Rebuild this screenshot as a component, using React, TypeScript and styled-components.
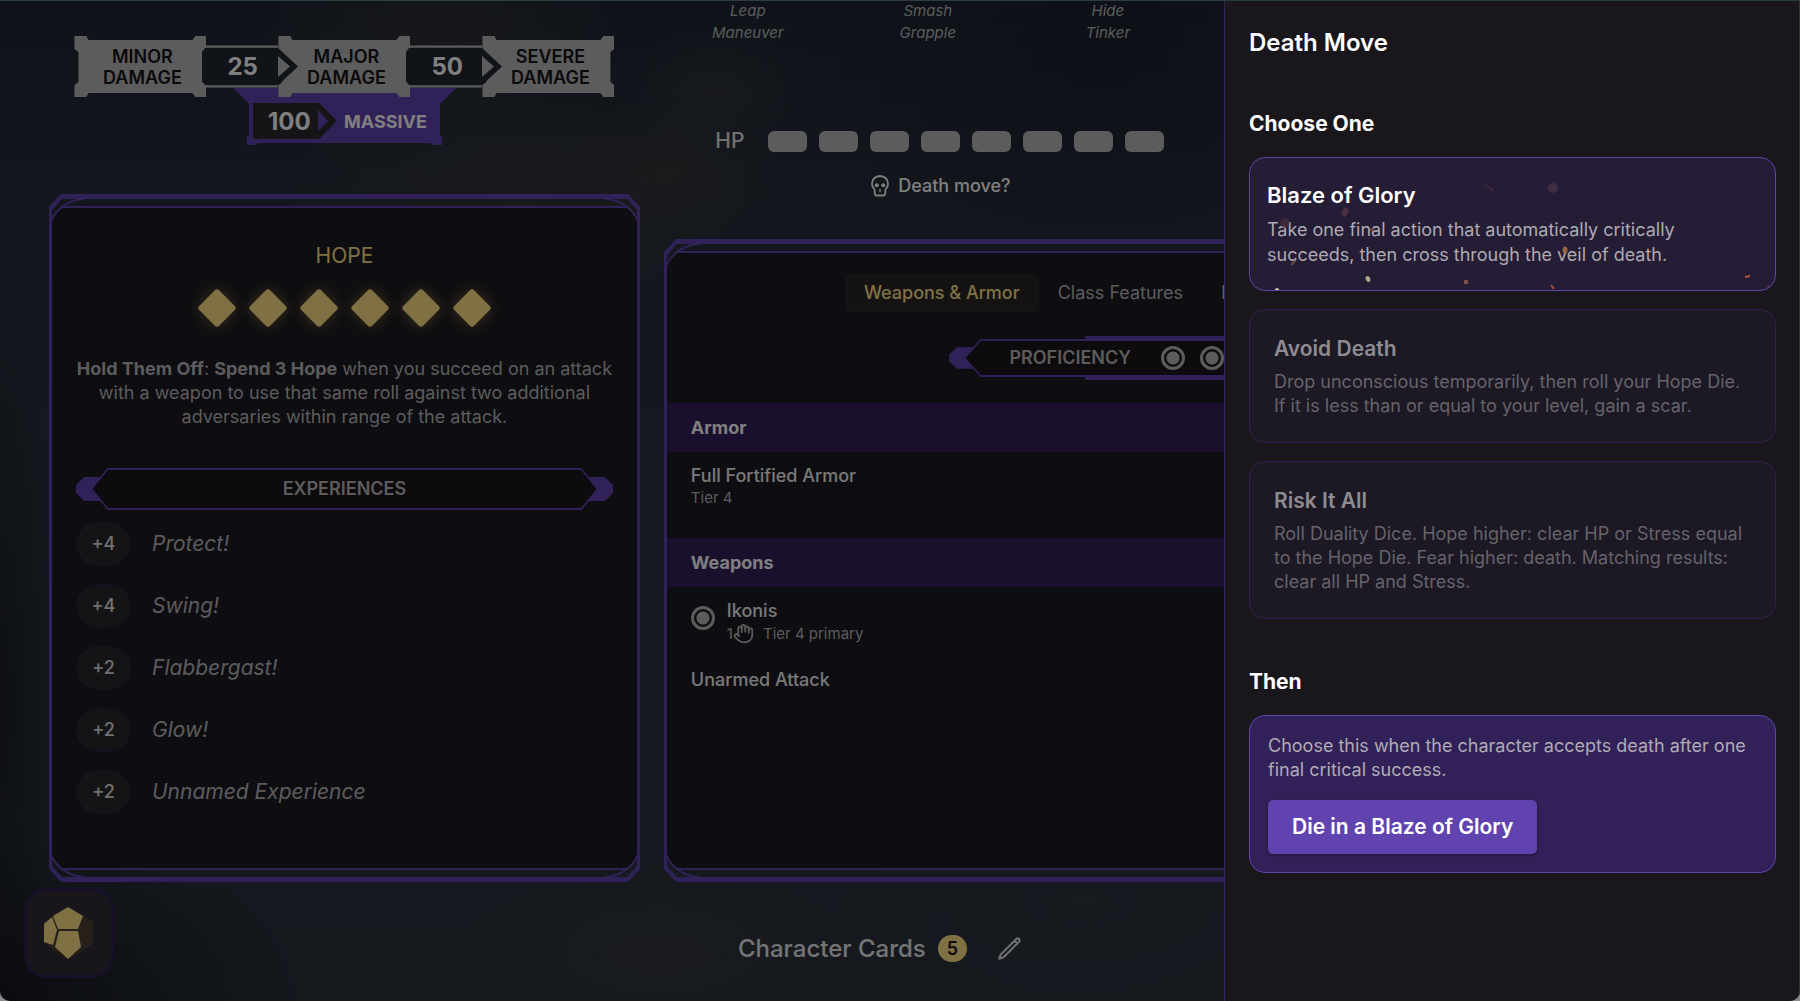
import React, { useState } from "react";
import styled, { createGlobalStyle, css } from "styled-components";
import { Hand } from "lucide-react";
import { HiOutlinePencil } from "react-icons/hi2";

const purple = "#6143b0";
const gold = "#ffe286";
const silver = "#b8b8b8";

const GlobalStyle = createGlobalStyle`
  * { box-sizing: border-box; }
  html { background: #8c8c8c; }
  body {
    margin: 0;
    font-family: Inter, "Liberation Sans", sans-serif;
    font-size: 18px;
    line-height: 24px;
    color: #fff;
  }
  button {
    font: inherit;
    color: inherit;
    background: none;
    border: 0;
    padding: 0;
    margin: 0;
    cursor: pointer;
  }
  h1, h2, h3, p, ul { margin: 0; padding: 0; font-weight: inherit; }
`;

const Window = styled.div`
  position: relative;
  display: flex;
  flex-direction: column;
  min-height: 100vh;
  overflow: hidden;
  border-radius: 0 0 10px 10px;
  background-color: #252d3a;
  background-image:
    radial-gradient(ellipse 240px 120px at 520px 200px, rgba(68, 60, 56, 0.4), transparent),
    radial-gradient(ellipse 180px 90px at 440px 30px, rgba(70, 62, 56, 0.35), transparent),
    radial-gradient(ellipse 90px 60px at 715px 90px, rgba(66, 64, 66, 0.4), transparent),
    radial-gradient(ellipse 110px 70px at 670px 170px, rgba(70, 62, 52, 0.35), transparent),
    radial-gradient(ellipse 300px 200px at 1100px 60px, rgba(22, 30, 42, 0.6), transparent),
    radial-gradient(ellipse 260px 120px at 1080px 900px, rgba(50, 56, 66, 0.5), transparent),
    radial-gradient(ellipse 200px 90px at 660px 950px, rgba(66, 60, 56, 0.35), transparent),
    radial-gradient(ellipse 300px 180px at 0px 1000px, rgba(14, 15, 18, 0.7), transparent),
    radial-gradient(ellipse 60px 400px at 0px 700px, rgba(22, 24, 30, 0.8), transparent),
    linear-gradient(180deg, #1f2733 0%, #272f3b 20%, #2b3440 60%, #2a323d 100%);
`;

const Sheet = styled.main`
  flex: 1;
  display: grid;
  grid-template-columns: minmax(0, 25fr) minmax(0, 46fr);
  gap: 24px;
  padding: 0 49px;
  isolation: isolate;
`;

const Column = styled.section`
  display: flex;
  flex-direction: column;
`;

/* ---------- Damage thresholds ---------- */

const Thresholds = styled.div`
  height: 194px;
  padding-top: 36px;
  display: flex;
  flex-direction: column;
  align-items: center;
`;

const ThresholdRow = styled.div`
  position: relative;
  z-index: 1;
  display: flex;
  align-items: center;
`;

const Plate = styled.div`
  width: 132px;
  height: 61px;
  display: flex;
  align-items: center;
  justify-content: center;
  padding-left: 4px;
  background: ${silver};
  color: #151318;
  font-weight: 600;
  line-height: 21px;
  text-align: center;
  clip-path: polygon(
    0 0, 12px 0, 14px 4px, 118px 4px, 121px 0, 100% 0, 100% 13px, 128px 16px,
    128px 46px, 100% 49px, 100% 100%, 121px 100%, 118px 57px, 14px 57px,
    12px 100%, 0 100%, 0 49px, 4px 46px, 4px 16px, 0 13px
  );
`;

const Connector = styled.div`
  position: relative;
  z-index: 1;
  width: 96px;
  height: 43px;
  margin: 0 -20px 0 -4px;
  display: flex;
  align-items: center;
  padding-left: 25px;
  font-size: 24px;
  font-weight: 700;
  isolation: isolate;
`;

const Art = styled.svg`
  position: absolute;
  inset: 0;
  width: 100%;
  height: 100%;
  z-index: -1;
`;

const Massive = styled.div`
  position: relative;
  width: 223px;
  height: 57px;
  margin-top: -9px;
  padding: 11px 29px 0 35px;
  display: flex;
  align-items: center;
  justify-content: space-between;
  font-weight: 700;
  isolation: isolate;
`;

const MassiveValue = styled.span`
  font-size: 24px;
`;

/* ---------- Framed panel ---------- */

const Frame = styled.div`
  position: relative;
  flex: 1;
  isolation: isolate;
  &::before {
    content: "";
    position: absolute;
    z-index: -1;
    inset: 13px 2px 13px 2px;
    border-radius: 18px;
    background: rgba(28, 26, 33, 0.96);
  }
`;

const FrameBand = styled.span<{ $end?: boolean }>`
  position: absolute;
  left: 12px;
  right: 12px;
  height: 14px;
  border: 0 solid ${purple};
  ${(p) =>
    p.$end
      ? css`bottom: 0; border-bottom-width: 5px; border-top-width: 2px;`
      : css`top: 0; border-top-width: 5px; border-bottom-width: 2px;`}
`;

const FrameSide = styled.span<{ $end?: boolean }>`
  position: absolute;
  top: 13px;
  bottom: 13px;
  width: 3px;
  background: ${purple};
  ${(p) => (p.$end ? "right: 0;" : "left: 0;")}
`;

const CornerArt = styled.svg<{ $x?: boolean; $y?: boolean }>`
  position: absolute;
  width: 36px;
  height: 30px;
  ${(p) => (p.$x ? "right: 0;" : "left: 0;")}
  ${(p) => (p.$y ? "bottom: 0;" : "top: 0;")}
  transform: scale(${(p) => (p.$x ? -1 : 1)}, ${(p) => (p.$y ? -1 : 1)});
`;

const Corner = (p: { $x?: boolean; $y?: boolean }) => (
  <CornerArt {...p} viewBox="0 0 36 30" fill="none" aria-hidden="true">
    <path d="M0 13 12 0V6L3 16V24H0Z" fill={purple} />
    <path d="M36 4.500C22 6 9 12 2 27" stroke={purple} strokeWidth="1.800" />
  </CornerArt>
);

const Panel = ({ children }: { children: React.ReactNode }) => (
  <Frame>
    <FrameBand />
    <FrameBand $end />
    <FrameSide />
    <FrameSide $end />
    <Corner />
    <Corner $x />
    <Corner $y />
    <Corner $x $y />
    {children}
  </Frame>
);

/* ---------- Banner ---------- */

const BannerBox = styled.div<{ $height: number }>`
  position: relative;
  display: flex;
  height: ${(p) => p.$height}px;
  color: ${silver};
  font-weight: 600;
`;

const BannerBody = styled.div<{ $start?: boolean }>`
  flex: 1;
  display: flex;
  align-items: center;
  justify-content: ${(p) => (p.$start ? "flex-start" : "center")};
  padding-left: ${(p) => (p.$start ? 28 : 0)}px;
  border: solid ${purple};
  border-width: 2px 0;
  background: #1a161b;
`;

const CapArt = styled.svg<{ $flip?: boolean }>`
  width: 32px;
  height: 100%;
  transform: scaleX(${(p) => (p.$flip ? -1 : 1)});
`;

const Cap = ({ $flip }: { $flip?: boolean }) => (
  <CapArt $flip={$flip} viewBox="0 0 32 42" preserveAspectRatio="none" aria-hidden="true">
    <path d="M8 9H26V33H8L0 25V17Z" fill={purple} />
    <path d="M32 0H31.500L14.500 21 31.500 42H32Z" fill={purple} />
    <path d="M32 2 16.500 21 32 40Z" fill="#1a161b" />
  </CapArt>
);

/* ---------- Hope panel ---------- */

const HopeContent = styled.div`
  display: flex;
  flex-direction: column;
  padding: 50px 27px 0;
`;

const HopeTitle = styled.h2`
  text-align: center;
  font-size: 21px;
  font-weight: 400;
  color: ${gold};
`;

const HopeTrack = styled.div`
  display: flex;
  justify-content: center;
  gap: 23px;
  margin-top: 26px;
`;

const HopeGem = styled.input`
  appearance: none;
  width: 28px;
  height: 28px;
  margin: 0;
  border-radius: 3px;
  background: ${gold};
  transform: rotate(45deg);
  box-shadow: 0 0 14px rgba(255, 200, 90, 0.42);
`;

const HopeRule = styled.p`
  margin: 35px -10px 39px;
  text-align: center;
  color: ${silver};
`;

const ExperienceList = styled.ul`
  list-style: none;
  display: flex;
  flex-direction: column;
  gap: 18px;
  margin-top: 12px;
`;

const Experience = styled.li`
  display: flex;
  align-items: center;
  gap: 21px;
  font-size: 21px;
  font-style: italic;
  color: ${silver};
`;

const Bonus = styled.button`
  width: 55px;
  height: 44px;
  border: 1px solid #2a1f4c;
  border-radius: 22px;
  background: #28272b;
  color: #e0e0e0;
  font-size: 18px;
  font-style: normal;
  font-weight: 500;
`;

/* ---------- Right column ---------- */

const Overview = styled.div`
  height: 239px;
  width: 552px;
  display: flex;
  flex-direction: column;
  align-items: center;
  color: #fff;
`;

const Traits = styled.div`
  align-self: flex-start;
  display: grid;
  grid-template-columns: repeat(3, 168px);
  gap: 12px;
  height: 44px;
  color: ${silver};
  font-size: 15px;
  font-style: italic;
  line-height: 22px;
  text-align: center;
`;

const HpRow = styled.div`
  display: flex;
  align-items: center;
  gap: 12px;
  margin-top: 85px;
  color: #e0e0e0;
  font-size: 21px;
  font-weight: 500;
`;

const HpLabel = styled.span`
  margin-right: 12px;
`;

const HpSlot = styled.input`
  appearance: none;
  width: 39px;
  height: 21px;
  margin: 0;
  border-radius: 6px;
  background: ${silver};
`;

const DeathLink = styled.button`
  display: flex;
  align-items: center;
  gap: 9px;
  margin-top: 21px;
  padding-left: 2px;
  font-weight: 500;
`;

const Tabs = styled.div`
  display: flex;
  width: 725px;
  margin: 0 auto;
  padding-top: 35px;
`;

const Tab = styled.button<{ $active?: boolean }>`
  height: 38px;
  padding: 0 18px;
  border: 1px solid ${(p) => (p.$active ? "#2d282c" : "transparent")};
  border-radius: 6px;
  background: ${(p) => (p.$active ? "#282426" : "transparent")};
  color: ${(p) => (p.$active ? gold : silver)};
  font-weight: ${(p) => (p.$active ? 500 : 400)};
`;

const Proficiency = styled.div`
  position: relative;
  width: 516px;
  margin: 27px auto 26px;
  &::before, &::after {
    content: "";
    position: absolute;
    left: 136px;
    right: 136px;
    height: 5px;
    background: ${purple};
  }
  &::before { top: -3px; }
  &::after { bottom: -3px; }
`;

const Pips = styled.div`
  display: flex;
  gap: 15px;
  margin-left: 30px;
`;

const Pip = styled.input`
  appearance: none;
  width: 24px;
  height: 24px;
  margin: 0;
  border: 3px solid ${silver};
  border-radius: 50%;
  background: radial-gradient(circle, ${silver} 6px, transparent 7px);
  flex: none;
`;

const GroupTitle = styled.h3`
  height: 49px;
  margin: 0 3px;
  padding: 0 24px;
  display: flex;
  align-items: center;
  background: #35205a;
  color: #fff;
  font-size: 18px;
  font-weight: 700;
`;

const Item = styled.div<{ $gap: number }>`
  display: flex;
  align-items: flex-start;
  gap: 12px;
  padding: 12px 27px ${(p) => p.$gap}px;
  ${Pip} { margin-top: 7px; }
`;

const ItemName = styled.div`
  font-weight: 500;
  color: #f0f0f0;
`;

const ItemMeta = styled.div`
  display: flex;
  align-items: center;
  gap: 9px;
  font-size: 15px;
  line-height: 20px;
  color: ${silver};
`;

const Hands = styled.span`
  display: flex;
  align-items: center;
`;

/* ---------- Footer ---------- */

const Footer = styled.footer`
  position: relative;
  height: 119px;
  display: flex;
  align-items: center;
  justify-content: center;
  gap: 12px;
  padding: 14px 40px 0 0;
`;

const CardsTitle = styled.h2`
  font-size: 24px;
  font-weight: 500;
  color: #e8e8e8;
`;

const Count = styled.span`
  height: 27px;
  padding: 0 9px;
  border-radius: 14px;
  background: ${gold};
  color: #151318;
  font-weight: 600;
  line-height: 27px;
`;

const EditButton = styled.button`
  display: flex;
  margin-left: 18px;
  color: #e0e0e0;
`;

const DiceButton = styled.button`
  position: absolute;
  left: 24px;
  bottom: 23px;
  width: 90px;
  height: 90px;
  display: grid;
  place-items: center;
  border: 3px solid #301f50;
  border-radius: 22px;
  background: #302d36;
`;

/* ---------- Drawer ---------- */

const Backdrop = styled.div`
  position: absolute;
  inset: 0;
  background: rgba(0, 0, 0, 0.5);
`;

const Drawer = styled.aside`
  position: absolute;
  top: 0;
  right: 0;
  bottom: 0;
  width: 32%;
  padding: 28px 23px 24px 24px;
  display: flex;
  flex-direction: column;
  border-left: 1px solid #38235e;
  border-right: 1px solid #36343a;
  border-radius: 0 0 10px 0;
  background: #19161c;
`;

const DrawerTitle = styled.h1`
  font-size: 24px;
  font-weight: 600;
  line-height: 30px;
`;

const DrawerHeading = styled.h2<{ $top: number }>`
  margin: ${(p) => p.$top}px 0 18px;
  font-size: 21px;
  font-weight: 700;
  line-height: 30px;
`;

const Choices = styled.div`
  display: flex;
  flex-direction: column;
  gap: 18px;
`;

const Choice = styled.button<{ $selected: boolean }>`
  position: relative;
  overflow: hidden;
  display: flex;
  flex-direction: column;
  gap: ${(p) => (p.$selected ? 7 : 6)}px;
  min-height: 134px;
  padding: ${(p) => (p.$selected ? "22px 17px" : "24px")};
  border: 1px solid ${(p) => (p.$selected ? purple : "#2e2056")};
  border-radius: 16px;
  background: ${(p) => (p.$selected ? "#251c35" : "#1c1824")};
  color: ${(p) => (p.$selected ? "#fff" : "#8e8b91")};
  text-align: left;
`;

const ChoiceTitle = styled.h3<{ $selected: boolean }>`
  font-size: ${(p) => (p.$selected ? 22 : 21)}px;
  font-weight: 600;
  line-height: 30px;
`;

const ChoiceText = styled.p<{ $selected: boolean }>`
  color: ${(p) => (p.$selected ? "#aeaab2" : "#66636a")};
  font-size: 18px;
  line-height: ${(p) => (p.$selected ? 25 : 24)}px;
`;

const Embers = styled.svg`
  position: absolute;
  inset: 0;
  width: 100%;
  height: 100%;
  pointer-events: none;
`;

const Outcome = styled.div`
  display: flex;
  flex-direction: column;
  align-items: flex-start;
  gap: 18px;
  padding: 18px;
  border: 1px solid ${purple};
  border-radius: 16px;
  background: #312158;
  color: #b0abb5;
`;

const ConfirmButton = styled.button`
  height: 54px;
  padding: 0 24px;
  border-radius: 5px;
  background: ${purple};
  box-shadow: 0 1px 3px rgba(0, 0, 0, 0.4);
  color: #fff;
  font-size: 21px;
  font-weight: 600;
`;

const WindowEdge = styled.div`
  position: absolute;
  inset: 0;
  border-top: 1px solid #2a3c44;
  pointer-events: none;
`;

/* ---------- Data ---------- */

const experiences = [
  ["+4", "Protect!"],
  ["+4", "Swing!"],
  ["+2", "Flabbergast!"],
  ["+2", "Glow!"],
  ["+2", "Unnamed Experience"],
];

const traits = [
  ["Leap", "Maneuver"],
  ["Smash", "Grapple"],
  ["Hide", "Tinker"],
];

const moves = [
  {
    name: "Blaze of Glory",
    text: "Take one final action that automatically critically succeeds, then cross through the veil of death.",
  },
  {
    name: "Avoid Death",
    text: "Drop unconscious temporarily, then roll your Hope Die. If it is less than or equal to your level, gain a scar.",
  },
  {
    name: "Risk It All",
    text: "Roll Duality Dice. Hope higher: clear HP or Stress equal to the Hope Die. Fear higher: death. Matching results: clear all HP and Stress.",
  },
];

const Threshold = ({ value }: { value: number }) => (
  <Connector>
    <Art viewBox="0 0 96 43" aria-hidden="true">
      <path d="M4 0H76V43H4Z" fill="#77777c" />
      <path d="M4 1H76V2.500H4ZM4 40.500H76V42H4Z" fill={silver} />
      <path d="M3 3H76L96 21.500 76 40H3L0 36V7Z" fill="#212630" />
      <path d="M76 11 88 21.500 76 32Z" fill={silver} />
    </Art>
    {value}
  </Connector>
);

export default function App() {
  const [move, setMove] = useState(0);
  return (
    <>
      <GlobalStyle />
      <Window>
        <Sheet>
          <Column>
            <Thresholds>
              <ThresholdRow>
                <Plate>MINOR<br />DAMAGE</Plate>
                <Threshold value={25} />
                <Plate>MAJOR<br />DAMAGE</Plate>
                <Threshold value={50} />
                <Plate>SEVERE<br />DAMAGE</Plate>
              </ThresholdRow>
              <Massive>
                <Art viewBox="0 0 223 57" aria-hidden="true">
                  <path d="M0 0H223L207 16V48H209V57H200L197 55H25L22 57H14V48H16V16Z" fill={purple} />
                  <path d="M20 15H86L104 33 86 51H20Z" fill="#2b2b31" />
                  <path d="M85 22 95 33 85 43Z" fill={purple} />
                </Art>
                <MassiveValue>100</MassiveValue>
                <span>MASSIVE</span>
              </Massive>
            </Thresholds>
            <Panel>
              <HopeContent>
                <HopeTitle>HOPE</HopeTitle>
                <HopeTrack>
                  {[1, 2, 3, 4, 5, 6].map((n) => (
                    <HopeGem key={n} type="checkbox" defaultChecked aria-label={`Hope ${n}`} />
                  ))}
                </HopeTrack>
                <HopeRule>
                  <b>Hold Them Off</b>: <b>Spend 3 Hope</b> when you succeed on an attack
                  <br />
                  with a weapon to use that same roll against two additional
                  <br />
                  adversaries within range of the attack.
                </HopeRule>
                <BannerBox $height={42}>
                  <Cap />
                  <BannerBody>EXPERIENCES</BannerBody>
                  <Cap $flip />
                </BannerBox>
                <ExperienceList>
                  {experiences.map(([bonus, name]) => (
                    <Experience key={name}>
                      <Bonus>{bonus}</Bonus>
                      {name}
                    </Experience>
                  ))}
                </ExperienceList>
              </HopeContent>
            </Panel>
          </Column>

          <Column>
            <Overview>
              <Traits>
                {traits.map(([a, b]) => (
                  <div key={a}>{a}<br />{b}</div>
                ))}
              </Traits>
              <HpRow>
                <HpLabel>HP</HpLabel>
                {[1, 2, 3, 4, 5, 6, 7, 8].map((n) => (
                  <HpSlot key={n} type="checkbox" defaultChecked aria-label={`HP ${n}`} />
                ))}
              </HpRow>
              <DeathLink>
                <svg width="18" height="22" viewBox="0 0 18 22" fill="none" stroke="currentColor" strokeWidth="1.800" aria-hidden="true">
                  <path d="M9 1C4.200 1 1 4.400 1 8.800c0 2.200.8 3.600 1.800 4.600.7.700.9 1.300.9 2.300v2.300c0 1.600.9 2.500 2.300 2.500h6c1.400 0 2.300-.9 2.300-2.500v-2.300c0-1 .2-1.600.9-2.300 1-1 1.800-2.400 1.800-4.600C17 4.400 13.800 1 9 1Z" />
                  <circle cx="5.800" cy="10.300" r="2" fill="currentColor" stroke="none" />
                  <circle cx="12.200" cy="10.300" r="2" fill="currentColor" stroke="none" />
                  <path d="M9 13.300 10.400 16.500H7.600Z" fill="currentColor" stroke="none" />
                </svg>
                Death move?
              </DeathLink>
            </Overview>
            <Panel>
              <Tabs role="tablist">
                <Tab $active role="tab">Weapons &amp; Armor</Tab>
                <Tab role="tab">Class Features</Tab>
                <Tab role="tab">Inventory</Tab>
              </Tabs>
              <Proficiency>
                <BannerBox $height={38}>
                  <Cap />
                  <BannerBody $start>
                    PROFICIENCY
                    <Pips>
                      {[1, 2, 3, 4, 5, 6].map((n) => (
                        <Pip key={n} type="checkbox" defaultChecked aria-label={`Proficiency ${n}`} />
                      ))}
                    </Pips>
                  </BannerBody>
                  <Cap $flip />
                </BannerBox>
              </Proficiency>
              <GroupTitle>Armor</GroupTitle>
              <Item $gap={30}>
                <div>
                  <ItemName>Full Fortified Armor</ItemName>
                  <ItemMeta>Tier 4</ItemMeta>
                </div>
              </Item>
              <GroupTitle>Weapons</GroupTitle>
              <Item $gap={12}>
                <Pip type="radio" defaultChecked aria-label="Equip Ikonis" />
                <div>
                  <ItemName>Ikonis</ItemName>
                  <ItemMeta>
                    <Hands>1<Hand size={21} strokeWidth={2} /></Hands>
                    Tier 4 primary
                  </ItemMeta>
                </div>
              </Item>
              <Item $gap={12}>
                <ItemName>Unarmed Attack</ItemName>
              </Item>
            </Panel>
          </Column>
        </Sheet>

        <Footer>
          <DiceButton aria-label="Roll dice">
            <svg width="52" height="54" viewBox="0 0 52 54" aria-hidden="true">
              <path d="M25 1 50 16V38L25 53 1 37V16Z" fill="#4c3f35" />
              <path d="M25 1 40 10 35 23H15L10 10Z" fill={gold} />
              <path d="M16 25H35L38 41 25 53 12 41Z" fill={gold} />
              <path d="M9 11 14 24 10 39 1 36V18Z" fill={gold} />
            </svg>
          </DiceButton>
          <CardsTitle>Character Cards</CardsTitle>
          <Count>5</Count>
          <EditButton aria-label="Edit cards">
            <HiOutlinePencil size={25} strokeWidth={2} />
          </EditButton>
        </Footer>

        <Backdrop />

        <Drawer>
          <DrawerTitle>Death Move</DrawerTitle>
          <DrawerHeading $top={51}>Choose One</DrawerHeading>
          <Choices>
            {moves.map((m, i) => (
              <Choice key={m.name} $selected={i === move} aria-pressed={i === move} onClick={() => setMove(i)}>
                <ChoiceTitle $selected={i === move}>{m.name}</ChoiceTitle>
                <ChoiceText $selected={i === move}>{m.text}</ChoiceText>
                {i === 0 && (
                  <Embers aria-hidden="true">
                    <ellipse cx="303" cy="30" rx="5" ry="5" fill="#3d2f41" />
                    <path d="M234 26 244 33" stroke="#3d2739" strokeWidth="2" />
                    <ellipse cx="95" cy="54" rx="3" ry="4.500" fill="#4c3040" transform="rotate(15 95 54)" />
                    <ellipse cx="35" cy="65" rx="4.500" ry="5" fill="#4b2c3c" opacity="0.700" />
                    <ellipse cx="315" cy="92" rx="2.500" ry="3.500" fill="#96653f" />
                    <path d="M41 107 46 102" stroke="#7a5c45" strokeWidth="1.500" />
                    <ellipse cx="118" cy="121" rx="2.200" ry="3" fill="#b5a58b" transform="rotate(-25 118 121)" />
                    <ellipse cx="216" cy="124" rx="2.400" ry="2.200" fill="#80523f" />
                    <path d="M301 127 304 131" stroke="#a9503f" strokeWidth="1.800" />
                    <path d="M495 119 500 118" stroke="#b05242" strokeWidth="2" />
                    <ellipse cx="27" cy="132" rx="2" ry="2" fill="#d0c8a8" />
                    <ellipse cx="520" cy="130" rx="3" ry="2.500" fill="#6e4034" />
                    <circle cx="122" cy="72" r="1.500" fill="#8a4a3c" />
                  </Embers>
                )}
              </Choice>
            ))}
          </Choices>
          <DrawerHeading $top={48}>Then</DrawerHeading>
          <Outcome>
            <p>Choose this when the character accepts death after one final critical success.</p>
            <ConfirmButton>Die in a Blaze of Glory</ConfirmButton>
          </Outcome>
        </Drawer>
        <WindowEdge />
      </Window>
    </>
  );
}
